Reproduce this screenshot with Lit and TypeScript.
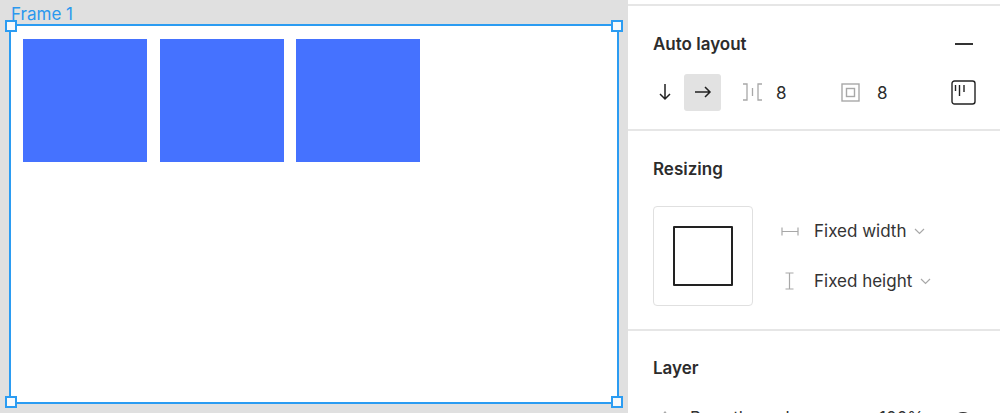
import { LitElement, html, css } from "lit";
import { customElement } from "lit/decorators.js";

@customElement("app-root")
export class AppRoot extends LitElement {
  static styles = css`
    :host { display: block; width: 1000px; height: 413px; overflow: hidden; font-family: Inter, "Liberation Sans", sans-serif; color: #2c2c2c; -webkit-font-smoothing: antialiased; }
    .page { display: flex; width: 1000px; height: 413px; overflow: hidden; }
    .canvas { width: 628px; height: 413px; flex: none; background: #e0e0e0; padding: 4px 9px 0 9px; box-sizing: border-box; display: flex; flex-direction: column; }
    .label { height: 20px; line-height: 20px; font-size: 17px; color: #2b98ee; padding-left: 2px; }
    .frame { position: relative; width: 610px; height: 380px; flex: none; box-sizing: border-box; background: #fff; border: 2px solid #2b9cf2; padding: 13px 12px; display: flex; gap: 12.5px; align-items: flex-start; }
    .box { width: 124px; height: 123px; background: #4572ff; flex: none; }
    .h { position: absolute; width: 12px; height: 12px; box-sizing: border-box; background: #f7f9fb; border: 2px solid #2b9cf2; }
    .tl { left: -6px; top: -6px; } .tr { right: -6px; top: -6px; }
    .bl { left: -6px; bottom: -6px; } .br { right: -6px; bottom: -6px; }

    .panel { flex: 1; background: #fff; padding-top: 4px; display: flex; flex-direction: column; }
    section { border-top: 2px solid #e6e6e6; padding: 0 25px; box-sizing: border-box; flex: none; }
    .s1 { height: 125px; } .s2 { height: 200px; } .s3 { height: 90px; }
    h2 { margin: 0; font-size: 17px; font-weight: 600; line-height: 20px; color: #2c2c2c; }
    .s1 h2 { padding-top: 28px; } .s2 h2 { padding-top: 28px; } .s3 h2 { padding-top: 27px; }
    .head { display: flex; justify-content: space-between; align-items: center; }
    .minus { width: 18px; height: 2px; background: #333; margin: 28px 3px 0 0; }
    .row { display: flex; align-items: center; margin-top: 19px; height: 38px; }
    svg { display: block; flex: none; }
    .ic { width: 37px; height: 37px; display: flex; align-items: center; justify-content: center; border-radius: 3px; flex: none; }
    .ic.on { background: #e2e2e2; }
    .down { margin-left: -7px; margin-right: 1px; }
    .gap { margin-left: 21px; margin-right: 13px; }
    .num { width: 18px; font-size: 17px; color: #2c2c2c; padding-top: 2px; }
    .pad { margin-left: 47px; margin-right: 17px; }
    .align { margin-left: 56px; }
    .size { display: flex; margin-top: 27px; gap: 25px; }
    .preview { width: 100px; height: 100px; box-sizing: border-box; border: 1px solid #e0e0e0; border-radius: 4px; display: flex; align-items: center; justify-content: center; flex: none; }
    .inner { width: 60px; height: 60px; box-sizing: border-box; border: 2px solid #222; border-radius: 1px; }
    .drops { display: flex; flex-direction: column; gap: 26px; padding-top: 13px; }
    .drop { display: flex; align-items: center; height: 24px; font-size: 17px; color: #333; }
    .di { width: 23px; display: flex; justify-content: center; margin-right: 13px; flex: none; }
    .chev { margin-left: 8px; }
    .mode { display: flex; align-items: center; margin-top: 28px; font-size: 17px; height: 24px; color: #333; }
    .mode svg:first-child { margin-left: 5px; }
    .mode .t { margin-left: 18px; width: 189px; }
    .mode .v { width: 74px; }
  `;

  render() {
    return html`<div class="page">
      <div class="canvas">
        <div class="label">Frame 1</div>
        <div class="frame">
          <div class="box"></div><div class="box"></div><div class="box"></div>
          <span class="h tl"></span><span class="h tr"></span><span class="h bl"></span><span class="h br"></span>
        </div>
      </div>
      <div class="panel">
        <section class="s1">
          <div class="head"><h2>Auto layout</h2><div class="minus"></div></div>
          <div class="row">
            <div class="ic down"><svg width="14" height="18" viewBox="0 0 14 18" fill="none" stroke="#222" stroke-width="1.5"><path d="M7 1v15M2 11l5 5 5-5"/></svg></div>
            <div class="ic on"><svg width="18" height="14" viewBox="0 0 18 14" fill="none" stroke="#222" stroke-width="1.5"><path d="M1 7h15M11 2l5 5-5 5"/></svg></div>
            <div class="gap"><svg width="21" height="18" viewBox="0 0 21 18" fill="none" stroke="#a8a8a8" stroke-width="1.3"><path d="M1 1h4v16H1M20 1h-4v16h4M10.5 5v8"/></svg></div>
            <div class="num">8</div>
            <div class="pad"><svg width="19" height="19" viewBox="0 0 19 19" fill="none" stroke="#a8a8a8" stroke-width="1.4"><rect x="1" y="1" width="17" height="17"/><rect x="5.5" y="5.5" width="8" height="8"/></svg></div>
            <div class="num">8</div>
            <div class="align"><svg width="25" height="25" viewBox="0 0 25 25" fill="none" stroke="#222" stroke-width="1.4"><rect x="1" y="1" width="23" height="23" rx="2.5"/><path d="M4.5 5v6M8.5 5v11M13 5v7" /></svg></div>
          </div>
        </section>
        <section class="s2">
          <h2>Resizing</h2>
          <div class="size">
            <div class="preview"><div class="inner"></div></div>
            <div class="drops">
              <div class="drop"><span class="di"><svg width="18" height="9" viewBox="0 0 18 9" fill="none" stroke="#a8a8a8" stroke-width="1.2"><path d="M1 0.5v8M17 0.5v8M1 4.5h16"/></svg></span>Fixed width<svg class="chev" width="11" height="7" viewBox="0 0 11 7" fill="none" stroke="#a8a8a8" stroke-width="1.2"><path d="M1 1l4.5 4.5L10 1"/></svg></div>
              <div class="drop"><span class="di"><svg width="9" height="18" viewBox="0 0 9 18" fill="none" stroke="#a8a8a8" stroke-width="1.2"><path d="M0.5 1h8M0.5 17h8M4.5 1v16"/></svg></span>Fixed height<svg class="chev" width="11" height="7" viewBox="0 0 11 7" fill="none" stroke="#a8a8a8" stroke-width="1.2"><path d="M1 1l4.5 4.5L10 1"/></svg></div>
            </div>
          </div>
        </section>
        <section class="s3">
          <h2>Layer</h2>
          <div class="mode">
            <svg width="14" height="14" viewBox="0 0 14 14" fill="none" stroke="#a8a8a8" stroke-width="1.2"><path d="M7 1l5 6-5 6-5-6z"/></svg>
            <span class="t">Pass through</span><span class="v">100%</span>
            <svg width="20" height="14" viewBox="0 0 20 14" fill="none" stroke="#333" stroke-width="1.3"><path d="M1 7c4-7 14-7 18 0-4 7-14 7-18 0z"/></svg>
          </div>
        </section>
      </div>
    </div>`;
  }
}
